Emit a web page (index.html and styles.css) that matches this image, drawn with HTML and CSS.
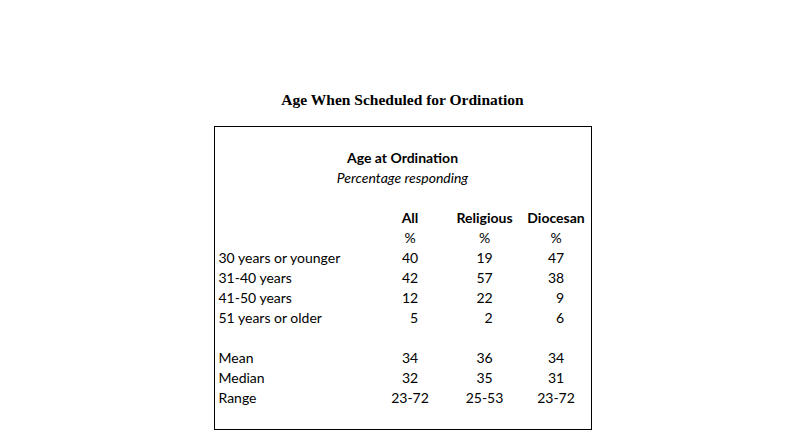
FILE: index.html
```html
<!DOCTYPE html>
<html>
<head>
<meta charset="utf-8">
<link rel="stylesheet" href="styles.css">
</head>
<body>
<div class="page">
  <h1 class="title">Age When Scheduled for Ordination</h1>
  <div class="box">
    <div class="cap">
      <div class="cap-main">Age at Ordination</div>
      <div class="cap-sub">Percentage responding</div>
    </div>
    <div class="grid">
      <div class="blank"></div>
      <div></div><div class="hd">All</div><div class="hd">Religious</div><div class="hd">Diocesan</div>
      <div></div><div class="num">%</div><div class="num">%</div><div class="num">%</div>
      <div class="lbl">30 years or younger</div><div class="num">40</div><div class="num">19</div><div class="num">47</div>
      <div class="lbl">31-40 years</div><div class="num">42</div><div class="num">57</div><div class="num">38</div>
      <div class="lbl">41-50 years</div><div class="num">12</div><div class="num">22</div><div class="num">&#8199;9</div>
      <div class="lbl">51 years or older</div><div class="num">&#8199;5</div><div class="num">&#8199;2</div><div class="num">&#8199;6</div>
      <div class="blank"></div>
      <div class="lbl">Mean</div><div class="num">34</div><div class="num">36</div><div class="num">34</div>
      <div class="lbl">Median</div><div class="num">32</div><div class="num">35</div><div class="num">31</div>
      <div class="lbl">Range</div><div class="num">23-72</div><div class="num">25-53</div><div class="num">23-72</div>
    </div>
  </div>
</div>
</body>
</html>
```
FILE: styles.css
```css
html, body {
  margin: 0;
  padding: 0;
  background: #ffffff;
}
.page {
  padding-top: 90px;
  color: #000;
}
.title {
  margin: 0 0 16px 0;
  font-family: "Liberation Serif", serif;
  font-weight: bold;
  font-size: 15.5px;
  line-height: 20px;
  text-align: center;
}
.box {
  box-sizing: border-box;
  width: 378px;
  height: 304px;
  margin: 0 auto;
  border: 1px solid #000;
  padding: 21px 0 0 4px;
  font-family: Lato, "Liberation Sans", sans-serif;
  font-size: 14px;
  line-height: 20px;
}
.cap {
  text-align: center;
  padding-right: 4px;
}
.cap-main {
  font-weight: bold;
}
.cap-sub {
  font-style: italic;
}
.grid {
  display: grid;
  grid-template-columns: 156px 71px 78px 65px;
  grid-auto-rows: 20px;
}
.blank {
  grid-column: 1 / -1;
}
.hd {
  font-weight: bold;
  text-align: center;
}
.num {
  text-align: center;
}
.lbl {
  text-align: left;
}
```
